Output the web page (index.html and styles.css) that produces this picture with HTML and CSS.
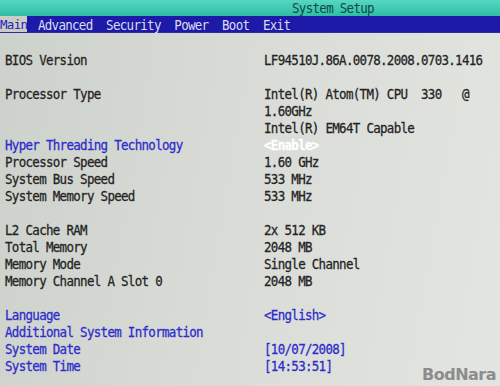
FILE: index.html
```html
<!DOCTYPE html>
<html lang="en">
<head>
  <meta charset="UTF-8">
  <title>System Setup</title>
  <link rel="stylesheet" href="styles.css">
</head>
<body>
  <div class="screen">
    <div class="title-bar">
      <span class="title">System Setup</span>
    </div>

    <div class="menu-bar">
      <span class="menu-item active">Main</span>
      <span class="menu-item">Advanced</span>
      <span class="menu-item">Security</span>
      <span class="menu-item">Power</span>
      <span class="menu-item">Boot</span>
      <span class="menu-item">Exit</span>
    </div>

    <div class="content">
      <div class="row"><span class="label">BIOS Version</span><span class="value">LF94510J.86A.0078.2008.0703.1416</span></div>
      <div class="row blank"></div>
      <div class="row"><span class="label">Processor Type</span><span class="value">Intel(R) Atom(TM) CPU  330   @</span></div>
      <div class="row"><span class="label"></span><span class="value">1.60GHz</span></div>
      <div class="row"><span class="label"></span><span class="value">Intel(R) EM64T Capable</span></div>
      <div class="row"><span class="label link">Hyper Threading Technology</span><span class="value selected">&lt;Enable&gt;</span></div>
      <div class="row"><span class="label">Processor Speed</span><span class="value">1.60 GHz</span></div>
      <div class="row"><span class="label">System Bus Speed</span><span class="value">533 MHz</span></div>
      <div class="row"><span class="label">System Memory Speed</span><span class="value">533 MHz</span></div>
      <div class="row blank"></div>
      <div class="row"><span class="label">L2 Cache RAM</span><span class="value">2x 512 KB</span></div>
      <div class="row"><span class="label">Total Memory</span><span class="value">2048 MB</span></div>
      <div class="row"><span class="label">Memory Mode</span><span class="value">Single Channel</span></div>
      <div class="row"><span class="label">Memory Channel A Slot 0</span><span class="value">2048 MB</span></div>
      <div class="row blank"></div>
      <div class="row"><span class="label link">Language</span><span class="value link">&lt;English&gt;</span></div>
      <div class="row"><span class="label link">Additional System Information</span><span class="value"></span></div>
      <div class="row"><span class="label link">System Date</span><span class="value link">[10/07/2008]</span></div>
      <div class="row"><span class="label link">System Time</span><span class="value link">[14:53:51]</span></div>
    </div>

    <div class="watermark">BodNara</div>
  </div>
</body>
</html>
```

FILE: styles.css
```css
* {
  margin: 0;
  padding: 0;
  box-sizing: border-box;
}

body {
  width: 500px;
  height: 386px;
  overflow: hidden;
  font-family: 'DejaVu Sans Mono', 'Liberation Mono', monospace;
  font-size: 12.5px;
  letter-spacing: -0.7px;
  color: #242424;
}

.screen {
  position: relative;
  width: 500px;
  height: 386px;
  background: linear-gradient(100deg, #cdd1cb 0%, #d8dbd6 45%, #e3e5e1 100%);
}

.title-bar {
  height: 16px;
  background: linear-gradient(180deg, #58d6c2 0%, #3ec8b2 60%, #2fbca6 100%);
  padding-left: 292px;
  line-height: 16px;
}

.title {
  display: inline-block;
  color: #0f4a44;
  transform: scaleY(1.15);
}

.menu-bar {
  height: 17px;
  background: #1c1aa6;
  border-bottom: 1px solid #2a2f9a;
  display: flex;
  gap: 13.6px;
  line-height: 17px;
  color: #dcdcf2;
}

.menu-item {
  display: inline-block;
  transform: scaleY(1.15);
}

.menu-item.active {
  background: #c9cdc6;
  color: #2424b8;
  margin-right: -3px;
  transform: none;
}

.content {
  padding-top: 18px;
  padding-left: 5px;
}

.row {
  display: grid;
  grid-template-columns: 259px 1fr;
  height: 17px;
  line-height: 17px;
  white-space: pre;
}

.row span {
  transform: scaleY(1.18);
  transform-origin: 0 55%;
  -webkit-text-stroke: 0.25px currentColor;
}

.link {
  color: #2c2ccc;
}

.value.selected {
  color: #ffffff;
  font-weight: bold;
}

.watermark {
  position: absolute;
  right: 4px;
  bottom: 2px;
  font-family: 'DejaVu Sans', sans-serif;
  font-weight: bold;
  font-size: 16px;
  letter-spacing: -0.5px;
  color: #8c8c8c;
}
```
